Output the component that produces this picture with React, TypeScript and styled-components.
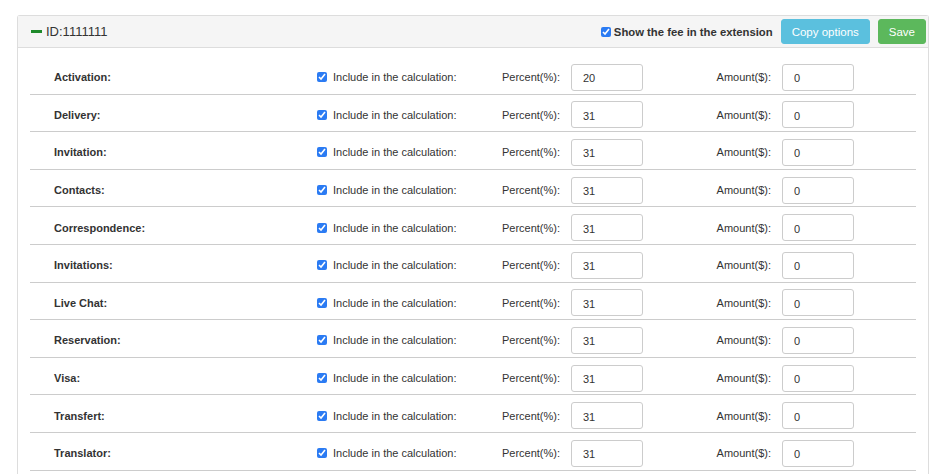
import React, { useState } from "react";
import styled, { createGlobalStyle } from "styled-components";

const GlobalStyle = createGlobalStyle`
  body {
    margin: 0;
    background: #fff;
    font-family: "Liberation Sans", Arial, Helvetica, sans-serif;
    color: #333;
  }
`;

const Page = styled.div`
  padding: 15px 12px 0 17px;
`;

const Panel = styled.div`
  border: 1px solid #ddd;
  border-bottom: none;
  border-radius: 3px 3px 0 0;
  background: #fff;
`;

const Header = styled.div`
  display: flex;
  align-items: center;
  height: 31px;
  padding: 0 2px 0 13px;
  background: #f5f5f5;
  border-bottom: 1px solid #ddd;
`;

const Collapse = styled.span`
  display: inline-block;
  width: 11px;
  height: 3px;
  background: #1e8a2b;
  margin-right: 4px;
`;

const Title = styled.div`
  font-size: 13px;
  color: #333;
  flex: 1;
`;

const ShowFee = styled.label`
  display: flex;
  align-items: center;
  font-size: 11.3px;
  font-weight: bold;
  color: #333;
`;

const Check = styled.input.attrs({ type: "checkbox" })<{ $gap?: number }>`
  width: 10px;
  height: 10px;
  margin: 0 ${(p) => p.$gap ?? 5}px 0 0;
  accent-color: #2b7bf3;
`;

const Button = styled.button<{ $variant: "info" | "success" }>`
  height: 25px;
  padding: 0 10px;
  border: 1px solid ${(p) => (p.$variant === "info" ? "#5bc0de" : "#5cb85c")};
  background: ${(p) => (p.$variant === "info" ? "#5bc0de" : "#5cb85c")};
  color: #fff;
  font-family: inherit;
  font-size: 11.5px;
  border-radius: 3px;
  margin-left: 8px;
`;

const Body = styled.div`
  padding: 9px 12px 0 12px;
  height: 418px;
  overflow: hidden;
`;

const Row = styled.div`
  display: flex;
  align-items: center;
  box-sizing: border-box;
  height: 37.6px;
  padding: 4px 0 0 24px;
  border-bottom: 1px solid #ccc;
`;

const Name = styled.div`
  width: 263px;
  font-size: 11px;
  font-weight: bold;
  color: #333;
`;

const Include = styled.label`
  display: flex;
  align-items: center;
  width: 163px;
  font-size: 11px;
  color: #333;
  white-space: nowrap;
`;

const FieldLabel = styled.div<{ $w: number }>`
  width: ${(p) => p.$w}px;
  text-align: right;
  font-size: 11px;
  color: #333;
  margin-right: 11px;
`;

const Field = styled.input`
  box-sizing: border-box;
  width: 72px;
  height: 27px;
  padding: 2px 0 0 11px;
  border: 1px solid #ccc;
  border-radius: 3px;
  font-family: inherit;
  font-size: 11px;
  color: #333;
  outline: none;
`;

const fees = [
  { name: "Activation", percent: "20" },
  { name: "Delivery", percent: "31" },
  { name: "Invitation", percent: "31" },
  { name: "Contacts", percent: "31" },
  { name: "Correspondence", percent: "31" },
  { name: "Invitations", percent: "31" },
  { name: "Live Chat", percent: "31" },
  { name: "Reservation", percent: "31" },
  { name: "Visa", percent: "31" },
  { name: "Transfert", percent: "31" },
  { name: "Translator", percent: "31" },
];

const FeeRow = ({ name, percent }: { name: string; percent: string }) => {
  const [pct, setPct] = useState(percent);
  const [amt, setAmt] = useState("0");
  return (
    <Row>
      <Name>{name}:</Name>
      <Include>
        <Check defaultChecked $gap={6} />
        Include in the calculation:
      </Include>
      <FieldLabel $w={80}>Percent(%):</FieldLabel>
      <Field value={pct} onChange={(e) => setPct(e.target.value)} />
      <FieldLabel $w={128}>Amount($):</FieldLabel>
      <Field value={amt} onChange={(e) => setAmt(e.target.value)} />
    </Row>
  );
};

const App = (): JSX.Element => {
  return (
    <Page>
      <GlobalStyle />
      <Panel>
        <Header>
          <Collapse />
          <Title>ID:1111111</Title>
          <ShowFee>
            <Check defaultChecked $gap={3} />
            Show the fee in the extension
          </ShowFee>
          <Button $variant="info">Copy options</Button>
          <Button $variant="success">Save</Button>
        </Header>
        <Body>
          {fees.map((f) => (
            <FeeRow key={f.name} name={f.name} percent={f.percent} />
          ))}
        </Body>
      </Panel>
    </Page>
  );
};

export default App;
